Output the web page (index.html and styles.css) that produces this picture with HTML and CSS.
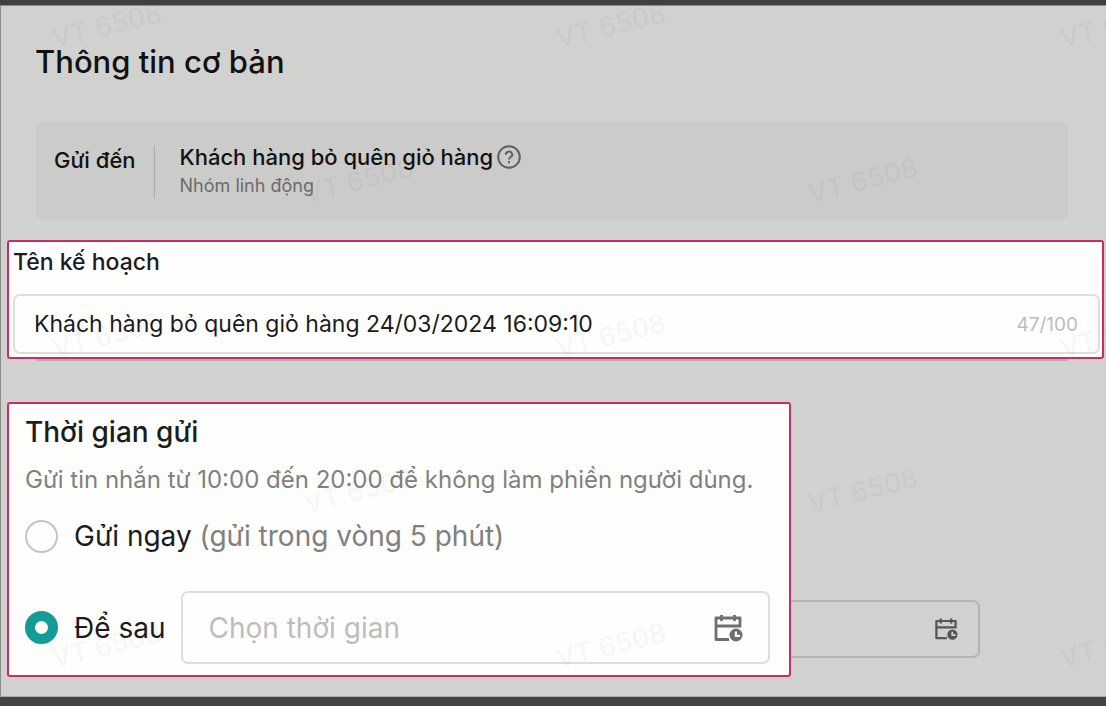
FILE: index.html
```html
<!DOCTYPE html>
<html lang="vi">
<head>
<meta charset="utf-8">
<meta name="viewport" content="width=device-width, initial-scale=1">
<title>Thông tin cơ bản</title>
<link rel="stylesheet" href="styles.css">
</head>
<body>
<svg class="symbols" aria-hidden="true">
  <symbol id="calendar-clock" viewBox="0 0 30 30">
    <path d="M16 26.500H3V5h24v9.500M3 13h24M8.500 2v6M21.500 2v6" fill="none" stroke="currentColor" stroke-width="2.800" stroke-linejoin="round"/>
    <path fill-rule="evenodd" d="M23 15.500a6.500 6.500 0 1 0 0 13a6.500 6.500 0 1 0 0-13M21.800 18.500h2.200v3.200h3v2.200h-5.200z" fill="currentColor"/>
  </symbol>
</svg>
<main class="page">
  <h1 class="title">Thông tin cơ bản</h1>

  <section class="audience">
    <div class="audience-label">Gửi đến</div>
    <div class="audience-body">
      <div class="audience-name">Khách hàng bỏ quên giỏ hàng
        <button class="help" type="button" aria-label="Trợ giúp">
          <svg class="help-icon" viewBox="0 0 24 24" fill="none" stroke="currentColor" stroke-width="2"><circle cx="12" cy="12" r="10.800"/><path d="M8.800 9.800a3.200 3 0 1 1 4.800 2.400c-1.100.7-1.600 1.100-1.600 2.300"/><path d="M12 16v2.200"/></svg>
        </button>
      </div>
      <div class="audience-type">Nhóm linh động</div>
    </div>
  </section>

  <section class="highlight plan">
    <label class="plan-label" for="plan-name">Tên kế hoạch</label>
    <div class="field plan-field">
      <input class="field-input" id="plan-name" type="text" value="Khách hàng bỏ quên giỏ hàng 24/03/2024 16:09:10">
      <span class="counter">47/100</span>
    </div>
  </section>
  <div class="plan-edge"></div>

  <div class="schedule-row">
    <section class="highlight schedule">
      <h2 class="subtitle">Thời gian gửi</h2>
      <p class="hint">Gửi tin nhắn từ 10:00 đến 20:00 để không làm phiền người dùng.</p>
      <div class="option">
        <input class="radio" type="radio" name="when" id="send-now">
        <label class="option-label" for="send-now">Gửi ngay <span class="muted">(gửi trong vòng 5 phút)</span></label>
      </div>
      <div class="option option-later">
        <input class="radio" type="radio" name="when" id="send-later" checked>
        <label class="option-label" for="send-later">Để sau</label>
        <div class="field date-field">
          <input class="field-input date-input" type="text" placeholder="Chọn thời gian" aria-label="Chọn thời gian">
          <button class="date-button" type="button" aria-label="Mở lịch"><svg class="date-icon"><use href="#calendar-clock"/></svg></button>
        </div>
      </div>
    </section>
    <div class="back-field">
      <button class="date-button" type="button" aria-label="Mở lịch"><svg class="back-icon"><use href="#calendar-clock"/></svg></button>
    </div>
  </div>

  <div class="watermarks" aria-hidden="true">
    <div class="marks"><span>VT 6508</span><span>VT 6508</span><span>VT 6508</span></div>
    <div class="marks marks-shifted"><span>VT 6508</span><span>VT 6508</span></div>
    <div class="marks"><span>VT 6508</span><span>VT 6508</span><span>VT 6508</span></div>
    <div class="marks marks-shifted"><span>VT 6508</span><span>VT 6508</span></div>
    <div class="marks"><span>VT 6508</span><span>VT 6508</span><span>VT 6508</span></div>
  </div>
</main>
</body>
</html>
```
FILE: styles.css
```css
* { box-sizing: border-box; }

body {
  margin: 0;
  min-height: 100vh;
  display: flex;
  flex-direction: column;
  border-top: 5px solid #3f3f3e;
  border-bottom: 9px solid #434342;
  background: #d1d1d0;
  color: #111;
  font-family: Inter, "Noto Sans", sans-serif;
}

.symbols { position: absolute; width: 0; height: 0; }

.page {
  position: relative;
  flex: 1;
  overflow: hidden;
  border-top: 1px solid #8c8c8c;
  border-left: 1px solid #8c8c8c;
  border-bottom: 1px solid #aaa;
}

button { padding: 0; border: 0; background: none; color: inherit; }

.title {
  margin: 36px 34px 40px;
  font-size: 31px;
  line-height: 40px;
  font-weight: 500;
}

.audience {
  display: flex;
  align-items: flex-start;
  margin: 0 38px 21px 35px;
  padding: 24px 18px 21px;
  border-radius: 5px;
  background: #cbcbca;
}

.audience-label {
  padding-right: 18px;
  font-size: 22px;
  line-height: 28px;
  font-weight: 500;
}

.audience-body {
  padding-left: 25px;
  border-left: 1px solid #aaa;
}

.audience-name {
  display: flex;
  align-items: center;
  gap: 4px;
  margin-bottom: 6px;
  font-size: 22px;
  line-height: 22px;
  font-weight: 500;
}

.help { display: flex; height: 22px; align-items: center; color: #606060; }
.help-icon { width: 24px; height: 24px; }

.audience-type {
  color: #6c6c6c;
  font-size: 18px;
  line-height: 24px;
}

.highlight {
  border: 2px solid #cb2c65;
  border-radius: 3px;
  background: #fefefd;
  color: #1c1c1c;
}

.plan {
  margin: 0 2px 0 6px;
  padding: 4px 2px 3px 4px;
}

.plan-label {
  display: block;
  margin-bottom: 16px;
  font-size: 23px;
  line-height: 32px;
  font-weight: 500;
}

.field {
  display: flex;
  align-items: center;
  border: 2px solid #dededd;
  border-radius: 7px;
}

.plan-field { height: 60px; padding: 0 20px 0 19px; }

.field-input {
  flex: 1;
  min-width: 0;
  padding: 0;
  border: 0;
  outline: 0;
  background: none;
  color: #1c1c1c;
  font: 23px/32px Inter, "Noto Sans", sans-serif;
}

.field-input::placeholder { color: #bdbdbd; opacity: 1; }

.counter { color: #bdbdbd; font-size: 19px; }

.plan-edge {
  height: 2px;
  margin: 0 38px 41px 35px;
  border-radius: 0 0 4px 4px;
  background: #aeaeae;
}

.schedule-row {
  display: grid;
  grid-template-columns: 784fr 189fr 126fr;
  align-items: end;
  padding-left: 6px;
}

.schedule { padding: 11px 19px 11px 16px; }

.subtitle {
  margin: 0 0 13px;
  font-size: 28px;
  line-height: 34px;
  font-weight: 500;
}

.hint {
  margin: 0 0 18px;
  color: #808080;
  font-size: 24px;
  line-height: 36px;
}

.option {
  display: flex;
  align-items: center;
  height: 40px;
}

.option-later { height: 73px; margin-top: 35px; }

.radio {
  appearance: none;
  flex: none;
  width: 33px;
  height: 33px;
  margin: 0 16px 0 0;
  border: 2px solid #c4c4c4;
  border-radius: 50%;
}

.radio:checked { border: 10px solid #149b95; }

.option-label { font-size: 28px; line-height: 40px; white-space: nowrap; }
.muted { color: #808080; }

.date-field {
  flex: 1;
  height: 73px;
  margin-left: 16px;
  padding: 0 25px;
}

.date-input { font-size: 28px; }

.date-button { display: flex; color: #6f6f6e; }
.date-icon { width: 30px; height: 30px; }

.back-field {
  display: flex;
  align-items: center;
  justify-content: flex-end;
  height: 58px;
  margin-bottom: 19px;
  padding-right: 20px;
  border: 2px solid #b4b4b4;
  border-left: 0;
  border-radius: 0 7px 7px 0;
}

.back-field .date-button { color: #555; }
.back-icon { width: 24px; height: 24px; }

.watermarks {
  position: absolute;
  top: 0;
  left: 46px;
  pointer-events: none;
  color: rgba(0, 0, 0, 0.045);
  font-size: 27px;
  font-weight: 500;
  line-height: 40px;
  white-space: nowrap;
}

.marks {
  display: flex;
  gap: 384px;
  height: 155px;
}

.marks span { width: 120px; height: 40px; text-align: center; transform: rotate(-14deg); }
.marks-shifted { padding-left: 252px; }
```
